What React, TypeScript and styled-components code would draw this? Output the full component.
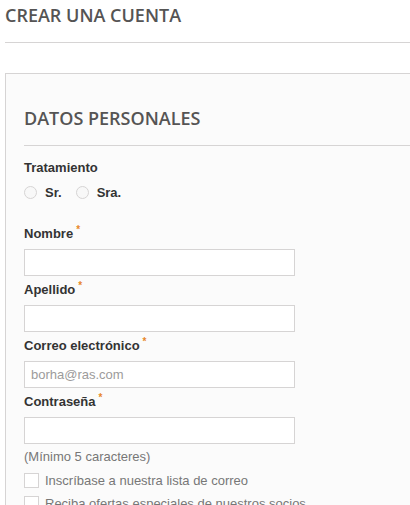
import React from 'react';
import styled, { createGlobalStyle } from 'styled-components';

const GlobalStyle = createGlobalStyle`
  html, body {
    margin: 0;
    padding: 0;
    background: #ffffff;
  }
  body {
    font-family: Arial, "Liberation Sans", sans-serif;
    overflow: hidden;
  }
`;

const Page = styled.div`
  width: 410px;
  height: 505px;
  padding-left: 5px;
  box-sizing: border-box;
  overflow: hidden;
`;

const PageTitle = styled.h1`
  margin: 0;
  padding: 4px 0 16px;
  font-family: "Open Sans", sans-serif;
  font-weight: 600;
  font-size: 18px;
  line-height: 22px;
  color: #555454;
  text-transform: uppercase;
  border-bottom: 1px solid #d6d4d4;
`;

const Panel = styled.div`
  margin-top: 30px;
  margin-right: -40px;
  border: 1px solid #d6d4d4;
  background: #fbfbfb;
  padding: 32px 0 40px 18px;
`;

const SectionTitle = styled.h3`
  margin: 0 0 13px;
  padding-bottom: 15px;
  font-family: "Open Sans", sans-serif;
  font-weight: 600;
  font-size: 18px;
  line-height: 24px;
  color: #555454;
  text-transform: uppercase;
  border-bottom: 1px solid #d6d4d4;
`;

const Label = styled.label`
  display: block;
  font-size: 13px;
  line-height: 18px;
  font-weight: bold;
  color: #333333;
  margin-bottom: 6px;
`;

const Req = styled.sup`
  color: #e8872a;
  font-size: 10px;
  vertical-align: top;
  line-height: 10px;
  margin-left: 3px;
`;

const RadioRow = styled.div`
  display: flex;
  align-items: center;
  gap: 14px;
  height: 18px;
  margin-top: 2px;
  margin-bottom: 24px;
`;

const RadioOption = styled.span`
  display: flex;
  align-items: center;
  gap: 8px;
  font-size: 13px;
  font-weight: bold;
  color: #333333;
`;

const RadioDot = styled.span`
  width: 11px;
  height: 11px;
  border-radius: 50%;
  border: 1px solid #d6d4d4;
  background: #f8f8f8;
`;

const Field = styled.div`
  margin-bottom: 5px;
`;

const Input = styled.input`
  display: block;
  box-sizing: border-box;
  width: 271px;
  height: 27px;
  margin: 0;
  padding: 0 6px;
  border: 1px solid #d6d4d4;
  background: #ffffff;
  font-family: Arial, "Liberation Sans", sans-serif;
  font-size: 13px;
  color: #9c9b9b;
  outline: none;
  &::placeholder {
    color: #9c9b9b;
  }
`;

const Hint = styled.div`
  font-size: 13px;
  line-height: 18px;
  color: #777777;
  margin-top: -1px;
  margin-bottom: 7px;
`;

const CheckRow = styled.div`
  display: flex;
  align-items: center;
  gap: 6px;
  height: 15px;
  margin-bottom: 8px;
  font-size: 13px;
  color: #777777;
`;

const CheckBox = styled.span`
  width: 13px;
  height: 13px;
  border: 1px solid #d6d4d4;
  background: #ffffff;
  flex-shrink: 0;
`;

const App: React.FC = () => {
  return (
    <>
      <GlobalStyle />
      <Page>
        <PageTitle>Crear una cuenta</PageTitle>
        <Panel>
          <SectionTitle>Datos personales</SectionTitle>
          <Label>Tratamiento</Label>
          <RadioRow>
            <RadioOption><RadioDot />Sr.</RadioOption>
            <RadioOption><RadioDot />Sra.</RadioOption>
          </RadioRow>
          <Field>
            <Label>Nombre<Req>*</Req></Label>
            <Input type="text" />
          </Field>
          <Field>
            <Label>Apellido<Req>*</Req></Label>
            <Input type="text" />
          </Field>
          <Field>
            <Label>Correo electrónico<Req>*</Req></Label>
            <Input type="text" placeholder="borha@ras.com" />
          </Field>
          <Field>
            <Label>Contraseña<Req>*</Req></Label>
            <Input type="password" />
          </Field>
          <Hint>(Mínimo 5 caracteres)</Hint>
          <CheckRow><CheckBox />Inscríbase a nuestra lista de correo</CheckRow>
          <CheckRow><CheckBox />Reciba ofertas especiales de nuestros socios</CheckRow>
        </Panel>
      </Page>
    </>
  );
};

export default App;
